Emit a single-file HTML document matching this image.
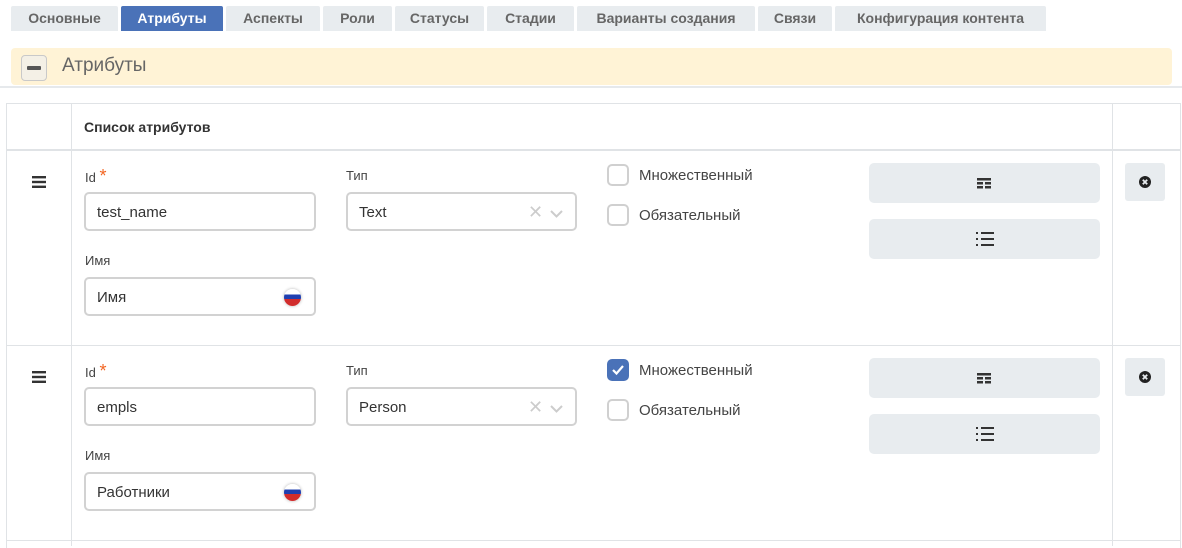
<!DOCTYPE html>
<html><head><meta charset="utf-8"><style>
*{box-sizing:border-box;margin:0;padding:0}
body{width:1182px;height:546px;background:#fff;font-family:"Liberation Sans","DejaVu Sans",sans-serif;color:#333;position:relative;overflow:hidden}
.a{position:absolute}
.tab{position:absolute;top:6px;height:25px;background:#e8ecef;color:#666;font-size:14px;font-weight:bold;text-align:center;line-height:25px;border-radius:2px 2px 0 0}
.tab.on{background:#4a72b8;color:#fff}
.lbl{position:absolute;font-size:13px;color:#444}
.inp{position:absolute;height:39px;border:2px solid #d2d2d2;border-radius:5px;font-size:15px;color:#333;padding-left:11px;line-height:37px;background:#fff}
.cb{position:absolute;width:22px;height:22px;border:2px solid #d0d0d0;border-radius:5px;background:#fff}
.cbl{position:absolute;font-size:15px;color:#444}
.btn{position:absolute;background:#e8ecef;border-radius:5px}
.flag{position:absolute;width:17px;height:17px;border-radius:50%;overflow:hidden;background:linear-gradient(#fff 0 33%,#1f3fb0 33% 60%,#d12c2c 60%);box-shadow:0 0 3px rgba(0,0,0,.3)}
</style></head><body>
<div class="tab" style="left:11px;width:107px">Основные</div>
<div class="tab on" style="left:121px;width:102px">Атрибуты</div>
<div class="tab" style="left:226px;width:94px">Аспекты</div>
<div class="tab" style="left:323px;width:69px">Роли</div>
<div class="tab" style="left:395px;width:89px">Статусы</div>
<div class="tab" style="left:487px;width:87px">Стадии</div>
<div class="tab" style="left:577px;width:178px">Варианты создания</div>
<div class="tab" style="left:758px;width:74px">Связи</div>
<div class="tab" style="left:835px;width:211px">Конфигурация контента</div>

<div class="a" style="left:11px;top:48px;width:1161px;height:37px;background:#fff3d6;border-radius:4px"></div>
<div class="a" style="left:0;top:86px;width:1182px;height:2px;background:#e6e9ec"></div>
<div class="a" style="left:21px;top:55px;width:26px;height:26px;border:1px solid #c9c9c9;border-radius:4px;background:#f4f0e6"></div>
<div class="a" style="left:27px;top:66px;width:14px;height:4px;background:#555;border-radius:1px"></div>
<div class="a" style="left:62px;top:55px;font-size:19px;color:#666">Атрибуты</div>

<div class="a" style="left:6px;top:103px;width:1175px;height:445px;border:1px solid #e0e3e6;border-bottom:none"></div>
<div class="a" style="left:71px;top:103px;width:1px;height:443px;background:#e0e3e6"></div>
<div class="a" style="left:1112px;top:103px;width:1px;height:443px;background:#e0e3e6"></div>
<div class="a" style="left:6px;top:149px;width:1175px;height:2px;background:#e0e3e6"></div>
<div class="a" style="left:6px;top:345px;width:1175px;height:1px;background:#e0e3e6"></div>
<div class="a" style="left:6px;top:540px;width:1175px;height:1px;background:#e0e3e6"></div>
<div class="a" style="left:84px;top:119px;font-size:14px;font-weight:bold;color:#333">Список атрибутов</div>

<div id="r1">
<svg class="a" style="left:32px;top:176px" width="14" height="12"><rect y="0" width="14" height="2.4" fill="#333"/><rect y="4.8" width="14" height="2.4" fill="#333"/><rect y="9.6" width="14" height="2.4" fill="#333"/></svg>
<div class="lbl" style="left:85px;top:166px">Id <span style="color:#f26522;font-size:18px">*</span></div>
<div class="inp" style="left:84px;top:192px;width:232px">test_name</div>
<div class="lbl" style="left:346px;top:168px">Тип</div>
<div class="inp" style="left:346px;top:192px;width:231px">Text<span style="position:absolute;left:180px;top:0;color:#ccc;font-size:18px">✕</span><svg style="position:absolute;left:202px;top:16px" width="13" height="8"><path d="M1 1l5.5 5.5L12 1" stroke="#ccc" stroke-width="2" fill="none"/></svg></div>
<div class="lbl" style="left:85px;top:253px">Имя</div>
<div class="inp" style="left:84px;top:277px;width:232px">Имя<div class="flag" style="left:198px;top:10px"></div></div>
<div class="cb" style="left:607px;top:164px"></div><div class="cbl" style="left:639px;top:167px">Множественный</div>
<div class="cb" style="left:607px;top:204px"></div><div class="cbl" style="left:639px;top:207px">Обязательный</div>
<div class="btn" style="left:869px;top:163px;width:231px;height:40px"><svg style="position:absolute;left:108px;top:15px" width="14" height="11"><g fill="#333"><rect width="14" height="2.5"/><rect y="4" width="6" height="2.5"/><rect x="8" y="4" width="6" height="2.5"/><rect y="8" width="6" height="2.5"/><rect x="8" y="8" width="6" height="2.5"/></g></svg></div>
<div class="btn" style="left:869px;top:219px;width:231px;height:40px"><svg style="position:absolute;left:107px;top:13px" width="18" height="14"><g fill="#333"><rect width="2" height="2"/><rect x="5" width="13" height="2"/><rect y="6" width="2" height="2"/><rect x="5" y="6" width="13" height="2"/><rect y="12" width="2" height="2"/><rect x="5" y="12" width="13" height="2"/></g></svg></div>
<div class="btn" style="left:1125px;top:163px;width:40px;height:38px;border-radius:3px"><svg style="position:absolute;left:14px;top:13px" width="12" height="12"><circle cx="6" cy="6" r="6" fill="#222"/><path d="M3.8 3.8l4.4 4.4M8.2 3.8l-4.4 4.4" stroke="#e8ecef" stroke-width="1.8"/></svg></div>
</div>

<div id="r2">
<svg class="a" style="left:32px;top:371px" width="14" height="12"><rect y="0" width="14" height="2.4" fill="#333"/><rect y="4.8" width="14" height="2.4" fill="#333"/><rect y="9.6" width="14" height="2.4" fill="#333"/></svg>
<div class="lbl" style="left:85px;top:361px">Id <span style="color:#f26522;font-size:18px">*</span></div>
<div class="inp" style="left:84px;top:387px;width:232px">empls</div>
<div class="lbl" style="left:346px;top:363px">Тип</div>
<div class="inp" style="left:346px;top:387px;width:231px">Person<span style="position:absolute;left:180px;top:0;color:#ccc;font-size:18px">✕</span><svg style="position:absolute;left:202px;top:16px" width="13" height="8"><path d="M1 1l5.5 5.5L12 1" stroke="#ccc" stroke-width="2" fill="none"/></svg></div>
<div class="lbl" style="left:85px;top:448px">Имя</div>
<div class="inp" style="left:84px;top:472px;width:232px">Работники<div class="flag" style="left:198px;top:10px"></div></div>
<div class="cb" style="left:607px;top:359px;background:#4a72b8;border-color:#4a72b8"><svg style="position:absolute;left:2px;top:3px" width="14" height="12"><path d="M2 6l3.5 3.5L12 2" stroke="#fff" stroke-width="2.2" fill="none"/></svg></div><div class="cbl" style="left:639px;top:362px">Множественный</div>
<div class="cb" style="left:607px;top:399px"></div><div class="cbl" style="left:639px;top:402px">Обязательный</div>
<div class="btn" style="left:869px;top:358px;width:231px;height:40px"><svg style="position:absolute;left:108px;top:15px" width="14" height="11"><g fill="#333"><rect width="14" height="2.5"/><rect y="4" width="6" height="2.5"/><rect x="8" y="4" width="6" height="2.5"/><rect y="8" width="6" height="2.5"/><rect x="8" y="8" width="6" height="2.5"/></g></svg></div>
<div class="btn" style="left:869px;top:414px;width:231px;height:40px"><svg style="position:absolute;left:107px;top:13px" width="18" height="14"><g fill="#333"><rect width="2" height="2"/><rect x="5" width="13" height="2"/><rect y="6" width="2" height="2"/><rect x="5" y="6" width="13" height="2"/><rect y="12" width="2" height="2"/><rect x="5" y="12" width="13" height="2"/></g></svg></div>
<div class="btn" style="left:1125px;top:358px;width:40px;height:38px;border-radius:3px"><svg style="position:absolute;left:14px;top:13px" width="12" height="12"><circle cx="6" cy="6" r="6" fill="#222"/><path d="M3.8 3.8l4.4 4.4M8.2 3.8l-4.4 4.4" stroke="#e8ecef" stroke-width="1.8"/></svg></div>
</div>
</body></html>
